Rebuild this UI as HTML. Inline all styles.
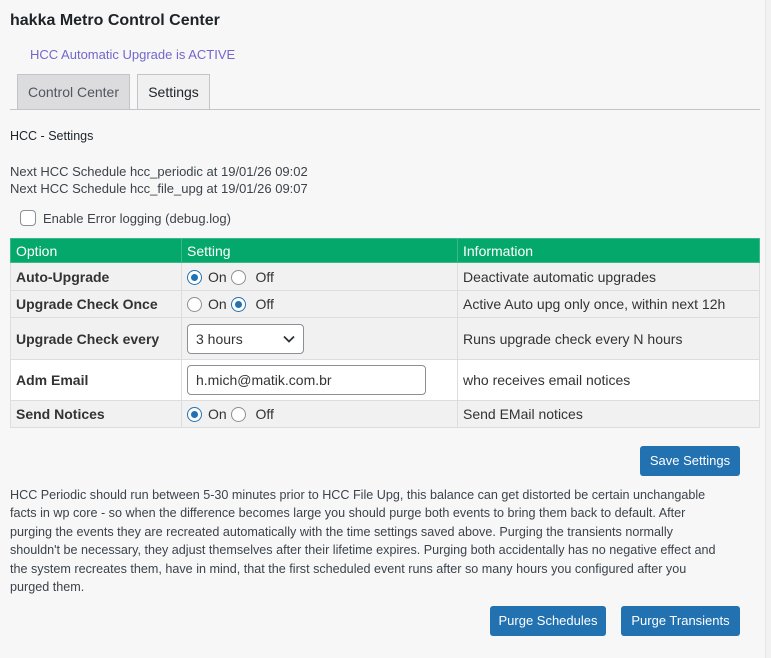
<!DOCTYPE html>
<html><head><meta charset="utf-8"><style>
*{box-sizing:border-box}
body{margin:0;width:771px;height:658px;background:#f7f7f7;font-family:"Liberation Sans",sans-serif;color:#3c434a;position:relative;overflow:hidden}
.strip{position:absolute;right:0;top:0;width:6px;height:658px;background:#f2f2f2;border-left:1px solid #e6e6e6}
.a{position:absolute;white-space:nowrap}
h1{position:absolute;left:10px;top:12px;margin:0;font-size:16px;font-weight:bold;color:#1d2327}
.tab{position:absolute;top:74px;height:36px;border:1px solid #c3c4c7;border-bottom:none;font-size:14px;line-height:35px;text-align:center}
table{position:absolute;left:10px;top:238px;width:750px;border-collapse:collapse;font-size:14px;color:#333}
td,th{border:1px solid #ddd;padding:0 5px;text-align:left}
th{background:#04a86a;color:#fff;font-weight:normal;height:24px;border-color:#3cb98a}
td.o{font-weight:bold;color:#333}
tr.g td{background:#f1f1f1}
tr.w td{background:#fff}
.r{display:inline-block;width:15px;height:15px;border:1px solid #8c8f94;border-radius:50%;vertical-align:-3px;background:#fff;position:relative;margin-right:6px}
.r.on::after{content:"";position:absolute;left:3px;top:3px;width:7px;height:7px;border-radius:50%;background:#2271b1}
.r.on{border-color:#2271b1}
.btn{position:absolute;background:#2271b1;color:#fff;border-radius:3px;font-size:13px;text-align:center;line-height:30px;height:30px}
p{position:absolute;left:10px;top:486px;margin:0;font-size:12.6px;line-height:18.4px;color:#3c434a;white-space:nowrap}
</style></head><body>
<div class="strip"></div>
<h1>hakka Metro Control Center</h1>
<div class="a" style="left:30px;top:47px;font-size:13px;color:#7366cc">HCC Automatic Upgrade is ACTIVE</div>
<div class="tab" style="left:17px;width:113px;background:#dcdcde;color:#50575e">Control Center</div>
<div class="tab" style="left:137px;width:73px;background:#f0f0f1;color:#1d2327">Settings</div>
<div style="position:absolute;left:10px;top:109px;width:750px;border-top:1px solid #c3c4c7"></div>
<div class="a" style="left:10px;top:129px;font-size:12.5px;color:#1d2327">HCC - Settings</div>
<div class="a" style="left:10px;top:164px;font-size:13px">Next HCC Schedule hcc_periodic at 19/01/26 09:02</div>
<div class="a" style="left:10px;top:181px;font-size:13px">Next HCC Schedule hcc_file_upg at 19/01/26 09:07</div>
<div class="a" style="left:20px;top:210px;width:16px;height:16px;border:1px solid #8c8f94;border-radius:4px;background:#fff"></div>
<div class="a" style="left:43px;top:211px;font-size:13px">Enable Error logging (debug.log)</div>
<table>
<tr><th style="width:171px">Option</th><th style="width:276px">Setting</th><th>Information</th></tr>
<tr class="g" style="height:28px"><td class="o">Auto-Upgrade</td><td><span class="r on"></span>On <span class="r"></span> Off</td><td>Deactivate automatic upgrades</td></tr>
<tr class="g" style="height:27px"><td class="o">Upgrade Check Once</td><td><span class="r"></span>On <span class="r on"></span> Off</td><td>Active Auto upg only once, within next 12h</td></tr>
<tr class="g" style="height:42px"><td class="o">Upgrade Check every</td><td><div style="width:117px;height:30px;border:1px solid #8c8f94;border-radius:4px;background:#fff;padding-left:8px;line-height:28px;position:relative">3 hours<svg style="position:absolute;right:8px;top:10px" width="12" height="8" viewBox="0 0 12 8"><path d="M1 1.5 6 6.5 11 1.5" fill="none" stroke="#2c3338" stroke-width="1.8"/></svg></div></td><td>Runs upgrade check every N hours</td></tr>
<tr class="w" style="height:41px"><td class="o">Adm Email</td><td><div style="width:239px;height:30px;border:1px solid #8c8f94;border-radius:4px;background:#fff;padding-left:8px;line-height:28px">h.mich@matik.com.br</div></td><td>who receives email notices</td></tr>
<tr class="g" style="height:27px"><td class="o">Send Notices</td><td><span class="r on"></span>On <span class="r"></span> Off</td><td>Send EMail notices</td></tr>
</table>
<div class="btn" style="left:640px;top:446px;width:100px">Save Settings</div>
<p>HCC Periodic should run between 5-30 minutes prior to HCC File Upg, this balance can get distorted be certain unchangable<br>facts in wp core - so when the difference becomes large you should purge both events to bring them back to default. After<br>purging the events they are recreated automatically with the time settings saved above. Purging the transients normally<br>shouldn't be necessary, they adjust themselves after their lifetime expires. Purging both accidentally has no negative effect and<br>the system recreates them, have in mind, that the first scheduled event runs after so many hours you configured after you<br>purged them.</p>
<div class="btn" style="left:490px;top:606px;width:116px">Purge Schedules</div>
<div class="btn" style="left:621px;top:606px;width:119px">Purge Transients</div>
</body></html>
